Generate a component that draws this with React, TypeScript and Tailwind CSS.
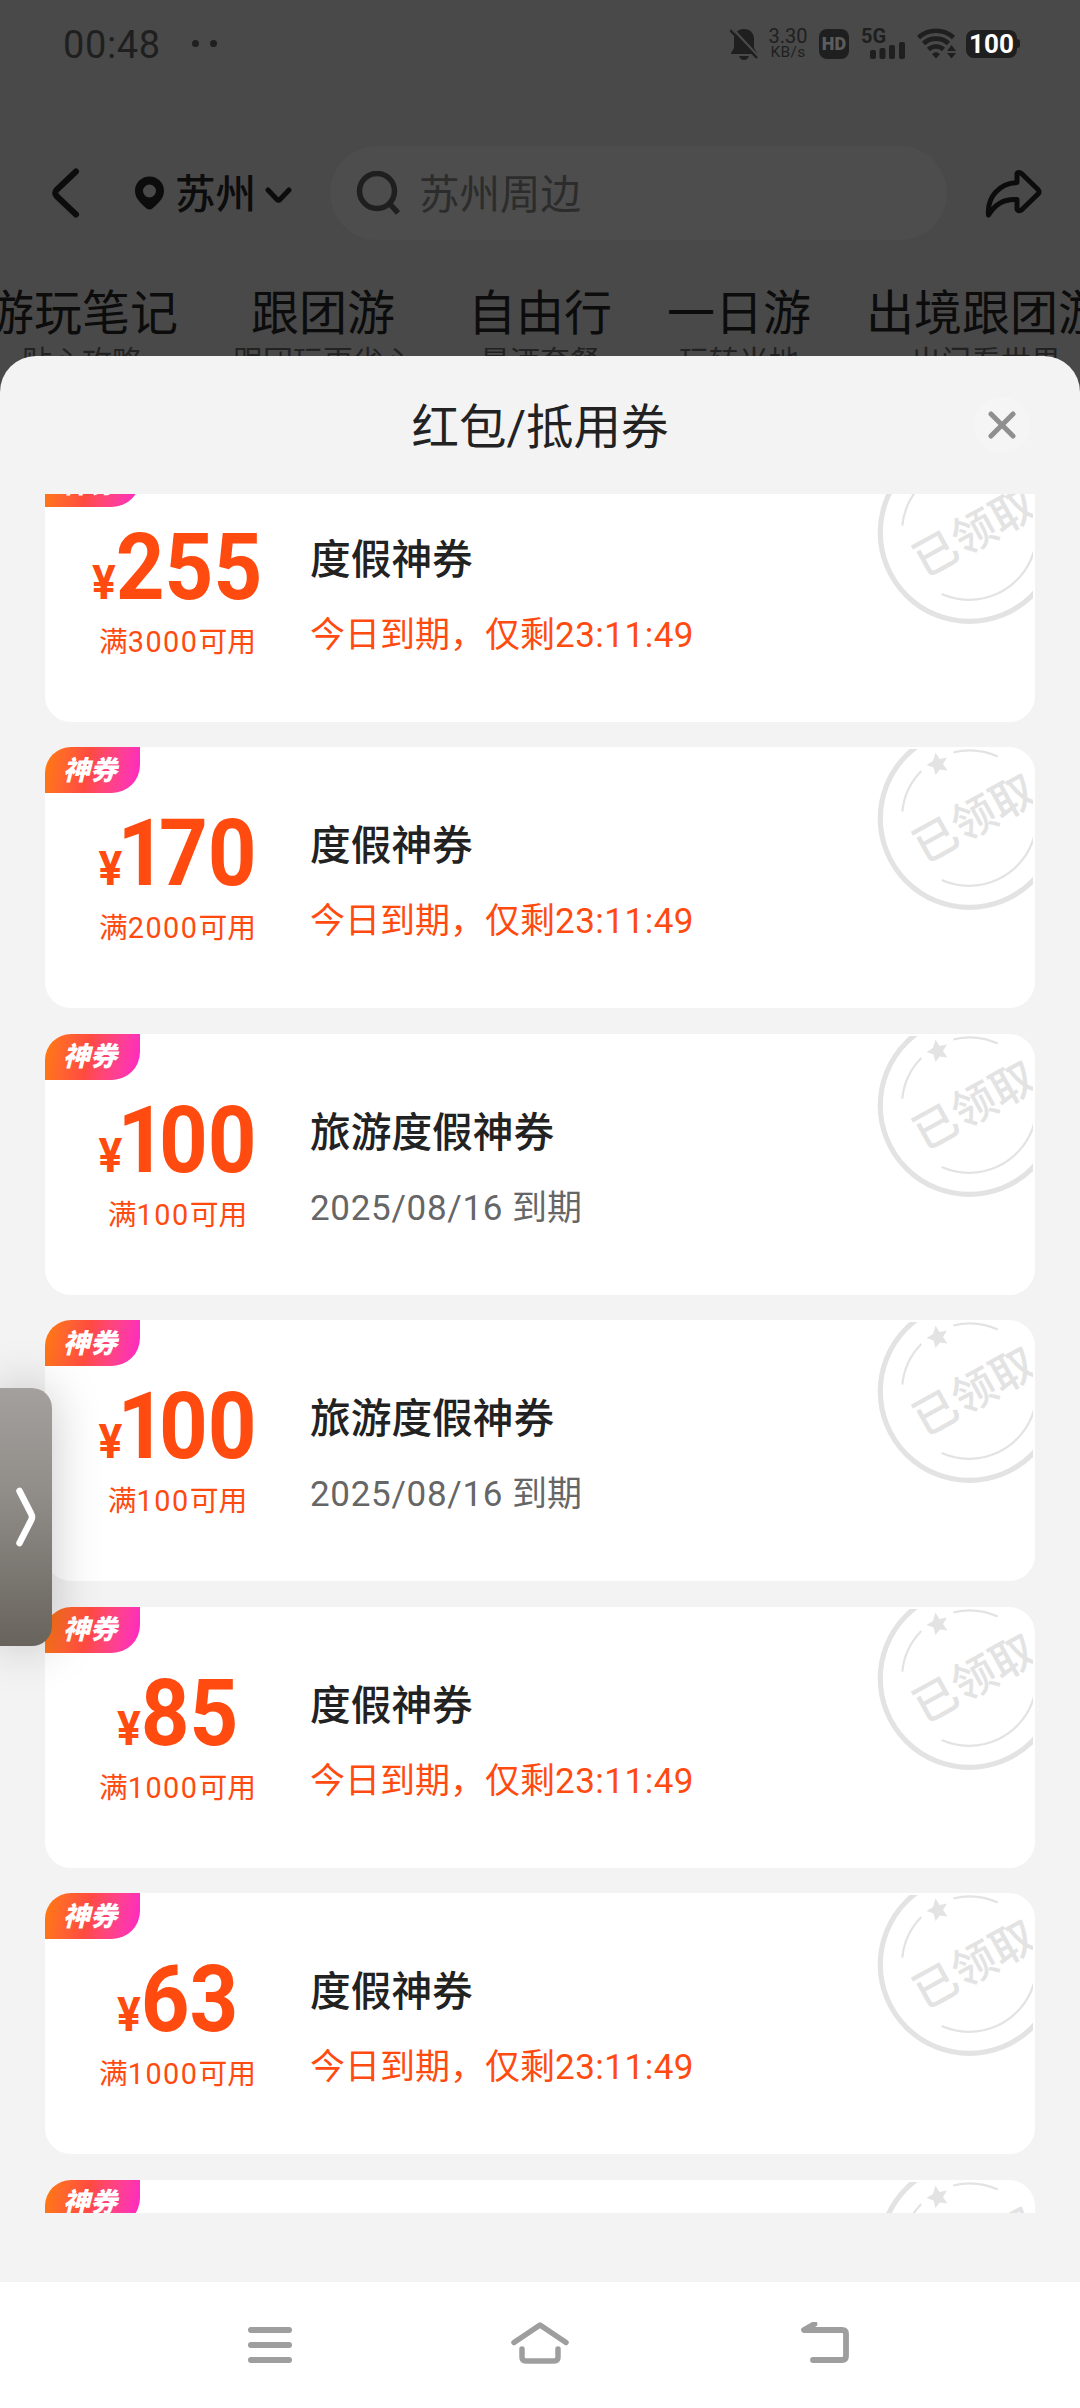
import React from "react";

const coupons = [
  { amount: "255", min: "3000", title: "度假神券", urgent: true },
  { amount: "170", min: "2000", title: "度假神券", urgent: true },
  { amount: "100", min: "100", title: "旅游度假神券", urgent: false },
  { amount: "100", min: "100", title: "旅游度假神券", urgent: false },
  { amount: "85", min: "1000", title: "度假神券", urgent: true },
  { amount: "63", min: "1000", title: "度假神券", urgent: true },
  { amount: "50", min: "1000", title: "度假神券", urgent: true },
];

const tabs = [
  ["游玩笔记", "贴心攻略"],
  ["跟团游", "跟团玩更省心"],
  ["自由行", "景酒套餐"],
  ["一日游", "玩转当地"],
  ["出境跟团游", "出门看世界"],
];

function StatusBar() {
  return (
    <div className="flex h-[84px] items-center pl-[63px] pr-[60px] pt-[3px] text-[#1f1f1f]">
      <span className="pt-[2px] text-[38px] leading-none tracking-[0.6px]">00:48</span>
      <span className="ml-[31px] size-[7px] rounded-full bg-[#1f1f1f]" />
      <span className="ml-[11px] size-[7px] rounded-full bg-[#1f1f1f]" />
      <div className="ml-auto flex items-center">
        <svg width="28" height="32" viewBox="0 0 28 32" fill="#1f1f1f">
          <path d="M14 1c-6 0-10 4-10 10v9L1 25v1h26v-1l-3-5v-9c0-6-4-10-10-10zM9 28h10c-1 3-3 4-5 4s-4-1-5-4z" />
          <path d="M3 1l25 27" stroke="#494949" strokeWidth="2.4" />
          <path d="M0 2l27 28" stroke="#1f1f1f" strokeWidth="2.4" />
        </svg>
        <div className="ml-[11px] flex w-[38px] flex-col items-center">
          <span className="text-[20px] leading-[16px]">3.30</span>
          <span className="mt-[1px] text-[15.5px] leading-[15px] tracking-[0.3px]">KB/s</span>
        </div>
        <span className="ml-[12px] flex h-[30px] w-[30px] items-center justify-center rounded-[8px] bg-[#1f1f1f] text-[18px] font-black leading-none text-[#5c5c5c]">
          HD
        </span>
        <div className="ml-[12px] flex h-[31px] w-[45px] flex-col">
          <span className="text-[20px] font-bold leading-[16px]">5G</span>
          <svg className="-mt-[2px] ml-[9px]" width="36" height="17" viewBox="0 0 36 17" fill="#1f1f1f">
            <rect x="0" y="8" width="6" height="9" rx="2" />
            <rect x="9.5" y="6" width="6" height="11" rx="2" />
            <rect x="19" y="3" width="6" height="14" rx="2" />
            <rect x="29" y="0" width="6" height="17" rx="2" />
          </svg>
        </div>
        <svg className="ml-[11px]" width="41" height="31" viewBox="0 0 41 31" fill="none" stroke="#1f1f1f" strokeWidth="4.6">
          <path d="M1.500 9.500a26 26 0 0 1 35 0" />
          <path d="M6.500 15.500a18.500 18.500 0 0 1 25 0" />
          <path d="M11.500 21.500a11 11 0 0 1 15 0" />
          <path d="M15.500 26q3.500-3 7 0L19 30z" fill="#1f1f1f" strokeWidth="1" />
          <path d="M30 23l4.500-6 4.500 6zM30 25l4.500 5.500 4.500-5.500z" fill="#1f1f1f" stroke="none" />
        </svg>
        <span className="ml-[8px] flex h-[28px] w-[51px] items-center justify-center rounded-[8px] bg-[#1f1f1f] text-[26px] font-bold leading-none text-white">
          100
        </span>
        <span className="h-[9px] w-[3px] rounded-r-[3px] bg-[#1f1f1f]" />
      </div>
    </div>
  );
}

function TopBar() {
  return (
    <div className="mt-[62px] flex h-[94px] items-center pl-[50px] pr-[38px]">
      <svg width="30" height="50" viewBox="0 0 30 50" fill="none" stroke="#0c0c0c" strokeWidth="6" strokeLinecap="round" strokeLinejoin="round">
        <path d="M26 3.500L6.500 22q-2.500 3 0 6L26 46.500" />
      </svg>
      <svg className="ml-[55px]" width="29" height="34" viewBox="0 0 29 34" fill="#0c0c0c">
        <path fillRule="evenodd" d="M14.500 0.500C6.500 0.500 0 6.700 0 14.700c0 8 6 12.500 11 17.200q3.500 3 7 0c5-4.700 11-9.200 11-17.200C29 6.700 22.500 0.500 14.500 0.500zm0 8a6.500 6.500 0 1 1 0 13 6.500 6.500 0 0 1 0-13z" />
      </svg>
      <span className="ml-[11px] pt-[5px] text-[40.500px] font-medium leading-none text-[#0c0c0c]">苏州</span>
      <svg className="ml-[9px] mt-[5px]" width="27" height="17" viewBox="0 0 27 17" fill="none" stroke="#0c0c0c" strokeWidth="5" strokeLinecap="round" strokeLinejoin="round">
        <path d="M3 3l9 9.500q1.500 1.300 3 0L24 3" />
      </svg>
      <div className="ml-[38px] flex h-[94px] w-[617px] items-center rounded-full bg-[#4d4d4d] pl-[26px]">
        <svg width="44" height="44" viewBox="0 0 44 44" fill="none" stroke="#1f1f1f" strokeWidth="5.500">
          <circle cx="21" cy="20" r="17.500" />
          <path d="M33 32l9 10" />
        </svg>
        <span className="ml-[19px] pt-[5px] text-[40.500px] leading-none text-[#2c2c2c]">苏州周边</span>
      </div>
      <svg className="ml-auto mt-[2px]" width="58" height="50" viewBox="0 0 58 50" fill="none" stroke="#0c0c0c" strokeWidth="5" strokeLinecap="round" strokeLinejoin="round">
        <path d="M33 4.500q2-2 4.500 0L54 20.500q2 2.500 0 4.500L37.500 41q-4.500 2-4.500-2V30.500C20 29.500 11 35 4.500 46 3 28 15 14.500 33 13.500z" />
      </svg>
    </div>
  );
}

function Stamp() {
  return (
    <svg className="absolute right-[2px] top-[2px]" width="160" height="165" viewBox="0 0 160 165" fill="none" stroke="#e3e3e3">
      <circle cx="96.300" cy="69.400" r="89" strokeWidth="5.200" />
      <g strokeWidth="2.200">
        <path d="M68.700 131A67.500 67.500 0 0 0 161 88" />
        <path d="M29.300 62.700A67.500 67.500 0 0 1 48.300 22" />
        <path d="M80.300 3.500A67.500 67.500 0 0 1 124.700 7.500" />
      </g>
      <path
        d="M62.500 3.500l4 6.500 7.500-1.500-4 6.500 4.500 6.500-7.700-1-4.300 5.500-2-7.500-7-2.500 6.500-4z"
        fill="#e3e3e3"
        stroke="none"
      />
      <text
        transform="translate(101 69) rotate(-29)"
        x="0"
        y="16"
        textAnchor="middle"
        fontSize="44"
        fontWeight="500"
        fill="#e3e3e3"
        stroke="none"
      >
        已领取
      </text>
    </svg>
  );
}

function Coupon({ amount, min, title, urgent }: (typeof coupons)[number]) {
  return (
    <div className="relative flex h-[261px] shrink-0 overflow-hidden rounded-[26px] bg-white">
      <div className="absolute left-0 top-0 flex h-[46px] w-[95px] items-center rounded-br-[28px] bg-linear-100 from-[#ff7a00] via-[#ff4a40] via-45% to-[#ff22c8] pl-[18px] pt-[2px] text-[27px] font-black italic leading-none text-white">
        神券
      </div>
      <Stamp />
      <div className="flex w-[265px] flex-col items-center pt-[61px] text-[#ff4a10]">
        <div className="flex scale-x-[0.925] items-baseline font-bold leading-[92px]">
          <span className="text-[48px]">¥</span>
          <span className="flex text-[92px]">
            {amount.split("").map((d, i) => (
              <span key={i} className={d === "1" ? "-ml-[5px] -mr-[8px]" : ""}>
                {d}
              </span>
            ))}
          </span>
        </div>
        <div className="-mt-[7px] text-[28.800px] leading-[40px]">
          满<span className="tracking-[1.500px]">{min}</span>可用
        </div>
      </div>
      <div className="flex flex-col pt-[69px]">
        <div className="text-[40.700px] font-medium leading-[60px] text-[#222]">{title}</div>
        {urgent ? (
          <div className="mt-[21px] text-[35px] leading-[50px] text-[#ff4a10]">
            今日到期，仅剩<span className="tracking-[0.500px]">23:11:49</span>
          </div>
        ) : (
          <div className="mt-[21px] text-[35px] leading-[50px] text-[#666]">
            <span className="tracking-[0.700px]">2025/08/16</span> 到期
          </div>
        )}
      </div>
    </div>
  );
}

export default function App() {
  return (
    <div className="relative flex h-[2408px] w-[1080px] flex-col overflow-hidden bg-[#494949] font-[Roboto,'Noto_Sans_CJK_SC',sans-serif]">
      <div className="h-[356px] shrink-0">
        <StatusBar />
        <TopBar />
        <div className="-ml-[14px] mt-[44px] flex gap-[55px] whitespace-nowrap">
          {tabs.map(([name, sub]) => (
            <div key={name} className="flex shrink-0 flex-col items-center">
              <span className="text-[48px] leading-[60px] text-[#0c0c0c]">{name}</span>
              <span className="-mt-[2px] text-[30px] leading-[40px] text-[#222]">{sub}</span>
            </div>
          ))}
        </div>
      </div>

      <div className="relative flex h-[1926px] shrink-0 flex-col rounded-t-[36px] bg-[#f3f3f3]">
        <div className="relative flex h-[138px] items-center justify-center pt-[8px]">
          <h1 className="text-[47.500px] leading-none text-[#222]">红包/抵用券</h1>
          <button className="absolute right-[50px] top-[41px] flex size-[56px] items-center justify-center rounded-full bg-[#f5f5f5]">
            <svg width="28" height="28" viewBox="0 0 28 28" fill="none" stroke="#8f8f8f" strokeWidth="5" strokeLinecap="round">
              <path d="M3 3l22 22M25 3L3 25" />
            </svg>
          </button>
        </div>
        <div className="h-[1719px] overflow-hidden px-[45px]">
          <div className="-mt-[33.500px] flex flex-col gap-[25.500px]">
            {coupons.map((c, i) => (
              <Coupon key={i} {...c} />
            ))}
          </div>
        </div>
      </div>

      <nav className="flex h-[126px] shrink-0 items-center bg-white pl-[247px]">
        <svg width="46" height="46" viewBox="0 0 46 46" stroke="#9e9e9e" strokeWidth="6" strokeLinecap="round">
          <path d="M4 8h38M4 23h38M4 38h38" />
        </svg>
        <svg className="ml-[217px]" width="60" height="46" viewBox="0 0 60 46" fill="none" stroke="#9e9e9e" strokeWidth="5.500" strokeLinecap="round" strokeLinejoin="round">
          <path d="M4 20.500L30 3l26 17.500" />
          <path d="M12 27v8q0 4 4 4h28q4 0 4-4v-8" />
        </svg>
        <svg className="ml-[230px]" width="50" height="46" viewBox="0 0 50 46" fill="none" stroke="#9e9e9e" strokeWidth="5.800" strokeLinecap="round" strokeLinejoin="round">
          <path d="M14.500 2L4 8h38q4 0 4 4v22q0 4-4 4H13" />
        </svg>
      </nav>

      <div className="absolute left-0 top-[1388px] flex h-[258px] w-[52px] items-center rounded-r-[20px] bg-linear-to-b from-[#a3a09d] via-[#918e8a] via-40% to-[#68635c] pl-[15px] shadow-[0_0_50px_rgba(0,0,0,0.22)]">
        <svg width="22" height="62" viewBox="0 0 22 62" fill="none" stroke="#fff" strokeWidth="6.500" strokeLinecap="round" strokeLinejoin="round">
          <path d="M4.500 5L16 27.500q2 3.500 0 7L4.500 57" />
        </svg>
      </div>
    </div>
  );
}
